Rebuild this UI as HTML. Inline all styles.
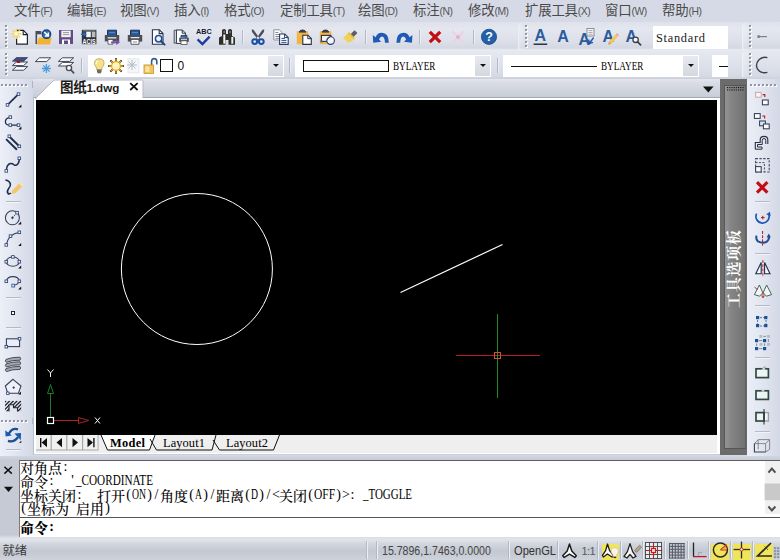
<!DOCTYPE html>
<html lang="zh-CN">
<head>
<meta charset="utf-8">
<title>图纸1.dwg</title>
<style>
*{box-sizing:border-box;margin:0;padding:0}
html,body{width:780px;height:560px;overflow:hidden;background:#d3d9e7}
body{position:relative;font-family:"Liberation Sans","Noto Sans CJK SC",sans-serif;font-size:13px;color:#3c3c3c}
.abs,svg.ic,.sepv,.seph,.grip,.griph{position:absolute}
svg.ic{overflow:visible}
#menubar{left:0;top:0;width:780px;height:22px;background:#d6dae6}
#menubar span{position:absolute;top:1px;height:20px;line-height:20px;white-space:nowrap;font-size:13.4px;color:#4a4a4a;letter-spacing:-0.2px}
#menubar span i{font-style:normal;font-size:10.4px;letter-spacing:-0.45px;color:#555}
#tb1{left:0;top:22px;width:780px;height:29px;background:linear-gradient(#dfe2eb 0,#e4e7ef 25%,#dde0e9 65%,#d4d8e2 90%,#ebedf3 97%,#e4e7ef 100%)}
#tb2{left:0;top:51px;width:780px;height:28px;background:linear-gradient(#e5e8f0 0,#e0e3ec 40%,#d6dae4 88%,#cdd1dc 100%)}
.grip{width:3px;background:linear-gradient(#8f97a9 0,#8f97a9 1.800px,transparent 1.800px) 0 0/1.800px 4px repeat-y,linear-gradient(#fff 0,#fff 1.800px,transparent 1.800px) 1px 1px/1.800px 4px repeat-y}
.griph{height:3px;background:linear-gradient(90deg,#8f97a9 0,#8f97a9 1.800px,transparent 1.800px) 0 0/4px 1.800px repeat-x,linear-gradient(90deg,#fff 0,#fff 1.800px,transparent 1.800px) 1px 1px/4px 1.800px repeat-x}
.sepv{width:2px;border-left:1px solid #b2b8c7;border-right:1px solid #eceef5}
.seph{height:2px;border-top:1px solid #b4bac9;border-bottom:1px solid #f1f3f8}
#lefttb{left:0;top:79px;width:33px;height:378px;background:linear-gradient(90deg,#eceff7 0,#e2e6f0 45%,#d3d8e6 100%)}
#tabrow{left:33px;top:78px;width:688px;height:20px;background:linear-gradient(#c4c8d4 0,#e2e5ec 1.5px,#dadde6 4px,#c9cdd8 19px)}
#frame{left:33px;top:97px;width:687px;height:358px;border-bottom:1.500px solid #c9cdd6;background:#fff;border-left:1px solid #b9bfcd;border-top:1px solid #a3a8b6}
#canvas{left:36px;top:100px;width:681px;height:335px;background:#000}
#botrow{left:36px;top:435px;width:681px;height:18px;background:#efefef}
#palette{left:720px;top:79px;width:27px;height:376px;background:#6b6b6b}
#palin{left:724px;top:85px;width:22px;height:364px;background:linear-gradient(90deg,#949494 0,#858585 30%,#727272 100%);border:1px solid #565656;border-right-color:#606060}
#righttb{left:747px;top:79px;width:33px;height:378px;background:linear-gradient(90deg,#eceff7 0,#e2e6f0 45%,#d3d8e6 100%)}
#cmd{left:0;top:456px;width:780px;height:84px;background:linear-gradient(#d2d6e0 0,#c5cad5 4px,#c5cad5 79px,#dfe2e9 82px)}
#cmdtext{left:19px;top:459.500px;width:761px;height:57.500px;background:#fff;border-top:1px solid #5e5e5e;border-left:1px solid #7c7c7c}
#cmdscroll{left:764.500px;top:460.500px;width:15.500px;height:53.500px;background:#f0f0f0}
#cmdin{left:19px;top:517px;width:761px;height:20px;background:#fff;border-top:1px solid #555;border-left:1px solid #7c7c7c}
#status{left:0;top:540px;width:780px;height:20px;background:linear-gradient(#e2e4ea 0,#d2d6de 18%,#c4c8d2 55%,#c9cdd6 80%,#cfd3db 100%)}
.song{font-family:"Liberation Mono","Noto Serif CJK SC",monospace}
.cl{position:absolute;left:20px;height:14px;line-height:14px;font-size:14px;color:#000;white-space:pre;font-family:"Noto Serif CJK SC","Liberation Mono",serif;font-weight:500}
.cl b{font-weight:inherit;font-family:"Liberation Serif",serif;font-size:14px;display:inline-block;width:7px;height:14px;line-height:14px;vertical-align:top;text-align:center;white-space:pre}
.cl b.w{text-align:left}
.cl u{display:inline-block;text-decoration:none;transform-origin:0 50%;white-space:pre}
.combo{position:absolute;background:#fff;height:22px;top:55px}
.cbtn{position:absolute;top:1px;right:1.300px;width:14.400px;height:19.600px;background:linear-gradient(#e9eaf0,#dcdee6 60%,#d6d8e1)}
.cbtn:after{content:"";position:absolute;left:4.800px;top:7.800px;border:3px solid transparent;border-top:3.300px solid #111;border-bottom:0}
.t12{position:absolute;font-family:"Liberation Mono",monospace;font-size:11.2px;letter-spacing:-0.72px;color:#000;white-space:pre;line-height:14px;height:14px}
.sq{font-family:"Liberation Serif",serif;font-size:12.2px;letter-spacing:0;transform-origin:0 50%;transform:scaleX(.752)}
</style>
</head>
<body>
<div id="menubar" class="abs"><span style="left:14px">文件<i>(F)</i></span><span style="left:67px">编辑<i>(E)</i></span><span style="left:120px">视图<i>(V)</i></span><span style="left:174px">插入<i>(I)</i></span><span style="left:224px">格式<i>(O)</i></span><span style="left:280px">定制工具<i>(T)</i></span><span style="left:358px">绘图<i>(D)</i></span><span style="left:413px">标注<i>(N)</i></span><span style="left:468px">修改<i>(M)</i></span><span style="left:525px">扩展工具<i>(X)</i></span><span style="left:605px">窗口<i>(W)</i></span><span style="left:662px">帮助<i>(H)</i></span></div>
<div id="tb1" class="abs"></div>
<div id="tb2" class="abs"></div>
<!-- toolbar row 1 -->
<div class="grip" style="left:5px;top:25px;height:23px"></div>
<svg class="ic" style="left:12px;top:29px" width="16" height="16" viewBox="0 0 16 16"><path d="M4.600 1.400H11.400L15.400 5.400V15.200H4.600Z" fill="#fff" stroke="#20222c" stroke-width="1.200"/><path d="M11.200 1.400V5.600H15.400" fill="none" stroke="#20222c" stroke-width="1.100"/><g stroke="#f4d466" stroke-width="1.400" stroke-linecap="round"><path d="M4.300 .2V9.200M-.2 4.700H8.800M1.100 1.500L7.500 7.900M7.500 1.500L1.100 7.900"/></g><circle cx="4.300" cy="4.700" r="2.300" fill="#fdf0a8"/><circle cx="4.300" cy="4.700" r="1.100" fill="#fffbe0"/></svg>
<svg class="ic" style="left:35px;top:29px" width="17" height="16" viewBox="0 0 17 16"><path d="M.5 15V2H5.400Q6.400 2 6.400 3V5.200H2.100V15Z" fill="#4a4c56"/><path d="M2.800 15.600Q2 15.600 2.200 14.700L3.400 9.400Q3.600 8.500 4.600 8.500H15.400Q16.500 8.500 16.300 9.500L15.200 14.800Q15 15.600 14 15.600Z" fill="#f2b234"/><circle cx="11.500" cy="5.200" r="4.300" fill="#2a68bc" stroke="#1c3a70" stroke-width="1.100"/><path d="M9.200 3L12.800 6.600M13.300 3.600V7.100H9.800" fill="none" stroke="#fff" stroke-width="1.500"/></svg>
<svg class="ic" style="left:58px;top:29px" width="16" height="16" viewBox="0 0 16 16"><path d="M1 1H15V15H1Z" fill="#624c86"/><rect x="3.3" y="1.6" width="9.4" height="6.6" fill="#f2f2f4"/><path d="M5 3.6H11M5 5.6H11" stroke="#9a9aa2" stroke-width="1"/><rect x="4" y="10.5" width="8" height="4.5" fill="#fff"/><rect x="6" y="11.5" width="4" height="3.5" fill="#624c86"/></svg>
<svg class="ic" style="left:81px;top:29px" width="16" height="16" viewBox="0 0 16 16"><rect x=".8" y=".8" width="14.6" height="14.4" fill="#30343f"/><rect x="5.2" y="2.6" width="4.6" height="5.6" fill="#f4f4f4"/><rect x="10.8" y="2.6" width="3.6" height="5.6" fill="#bdbdbd"/><rect x="1.8" y="1.4" width="12.6" height=".9" fill="#8c8c8c"/><path d="M0 5.3H4M2.6 3.6L4.6 5.3L2.6 7" stroke="#2a66b8" stroke-width="1.5" fill="none"/><text x="1.600" y="14.700" font-family="Liberation Sans,sans-serif" font-weight="bold" font-size="7.600" fill="#fff" textLength="13" lengthAdjust="spacingAndGlyphs">ACIS</text></svg>
<svg class="ic" style="left:104px;top:29px" width="16" height="16" viewBox="0 0 16 16"><path d="M3.5 6V1.2H12.5V6" fill="#1f57a8" stroke="#2a3247" stroke-width="1"/><rect x="5" y="3" width="6" height="1.2" fill="#4f86cf"/><path d="M.8 6H15.2V12.4H.8Z" fill="#4a4e58"/><rect x="3.6" y="8.2" width="8.8" height="1.3" fill="#e8e8e8"/><path d="M4 10.5H9V15.2H4Z" fill="#fff" stroke="#4a4e58" stroke-width=".8"/><path d="M7 12.6H12.2V10.2L16 13.2L12.2 16V14.2H7Z" fill="#7a4aa8"/></svg>
<svg class="ic" style="left:127px;top:29px" width="16" height="16" viewBox="0 0 16 16"><path d="M3.5 6V1.2H12.5V6" fill="#1f57a8" stroke="#2a3247" stroke-width="1"/><rect x="5" y="3" width="6" height="1.2" fill="#4f86cf"/><path d="M.8 6H15.2V12.6H.8Z" fill="#4a4e58"/><rect x="3.6" y="8" width="8.8" height="1.3" fill="#e8e8e8"/><path d="M4 10.4H12V15.3H4Z" fill="#fff" stroke="#4a4e58" stroke-width=".9"/><path d="M6 13H10" stroke="#888" stroke-width="1"/></svg>
<svg class="ic" style="left:150px;top:29px" width="16" height="16" viewBox="0 0 16 16"><path d="M2.4 .8H9.4L13 4.4V15.2H2.4Z" fill="#fff" stroke="#2a3247" stroke-width="1.1"/><path d="M9.2 .8V4.6H13" fill="none" stroke="#2a3247" stroke-width="1.1"/><circle cx="8.6" cy="9.8" r="3.2" fill="#eef3fb" stroke="#1f4f98" stroke-width="1.5"/><path d="M11 12.2L14.6 15.6" stroke="#1f3f78" stroke-width="1.9" stroke-linecap="round"/></svg>
<svg class="ic" style="left:173px;top:29px" width="16" height="16" viewBox="0 0 16 16"><path d="M1.2 1.2H5M1.2 1.2V14H5" fill="none" stroke="#555b6b" stroke-width="1.1"/><path d="M3.4 1H9.4L12.4 4V14.4H3.4Z" fill="#fff" stroke="#2a3247" stroke-width="1"/><path d="M9.2 1V4.2H12.4" fill="none" stroke="#2a3247" stroke-width="1"/><path d="M8 8.6V6.4H14V8.6" fill="#2a66b8" stroke="#2a3247" stroke-width=".8"/><rect x="6.2" y="8.6" width="9.6" height="4.2" fill="#4a4e58"/><rect x="8" y="9.8" width="6" height="1" fill="#dfe6f2"/><rect x="8" y="11.8" width="6" height="3.6" fill="#fff" stroke="#4a4e58" stroke-width=".8"/></svg>
<svg class="ic" style="left:196px;top:29px" width="16" height="16" viewBox="0 0 16 16"><text x="0" y="5.300" font-family="Liberation Sans,sans-serif" font-weight="bold" font-size="8" fill="#141a30" textLength="15.700" lengthAdjust="spacingAndGlyphs">ABC</text><path d="M1.600 10.400L6.400 15L13.600 7.600" fill="none" stroke="#1c3c9c" stroke-width="2.400"/></svg>
<svg class="ic" style="left:219px;top:29px" width="16" height="16" viewBox="0 0 16 16"><path d="M0 15.700V8.500L3 7V1.500Q3 0 5 0T7 1.500V5H9V1.500Q9 0 11 0T13 1.500V7L16 8.500V15.700H9.500V11H6.500V15.700Z" fill="#2e2e2c"/><rect x="4.300" y="5.500" width="2" height="9.200" fill="#f4f4f2"/><rect x="12.300" y="8" width="2" height="6.700" fill="#f4f4f2"/><rect x="4.600" y="1.800" width="1.200" height="2.400" fill="#8a8a88"/><rect x="10.400" y="1.800" width="1.200" height="2.400" fill="#8a8a88"/></svg>
<div class="sepv" style="left:242px;top:30px;height:14px"></div>
<svg class="ic" style="left:250px;top:29px" width="16" height="16" viewBox="0 0 16 16"><path d="M1.800 .6Q3.600 .4 4.400 2L10.400 10.600L8.600 11.400L2.400 3.400Q1.600 2 1.800 .6ZM14.200 .6Q12.400 .4 11.600 2L5.600 10.600L7.400 11.400L13.600 3.400Q14.400 2 14.200 .6Z" fill="#4a4c58"/><circle cx="4.700" cy="12.600" r="2.400" fill="#d6e6fa" stroke="#1c4fa4" stroke-width="2"/><circle cx="11.300" cy="12.600" r="2.400" fill="#d6e6fa" stroke="#1c4fa4" stroke-width="2"/></svg>
<svg class="ic" style="left:273px;top:29px" width="16" height="16" viewBox="0 0 16 16"><path d="M.8 .8H6.400L9 3.400V11H.8Z" fill="#fff" stroke="#8b91a2" stroke-width="1"/><path d="M2.400 3.500H5.400M2.400 5.500H6M2.400 7.500H6M2.400 9.300H6" stroke="#8088a0" stroke-width="1"/><path d="M6.6 5H11.8L15.2 8.4V15.4H6.6Z" fill="#fff" stroke="#2a3a5c" stroke-width="1.1"/><path d="M11.6 5V8.6H15.2" fill="none" stroke="#2a3a5c" stroke-width="1"/><path d="M8.4 9.4H12M8.4 11.4H13.4M8.4 13.4H13.4" stroke="#2a4f8f" stroke-width="1"/></svg>
<svg class="ic" style="left:296px;top:29px" width="16" height="16" viewBox="0 0 16 16"><rect x=".8" y="2.2" width="11.4" height="13" fill="#f0b545"/><path d="M3.6 2.8Q3.6 .4 6.5 .4T9.4 2.8Z" fill="#3a3d48"/><rect x="3" y="2" width="7" height="1.6" fill="#3a3d48"/><path d="M6.8 6.2H12L15.3 9.5V15.4H6.8Z" fill="#fff" stroke="#2a3247" stroke-width="1.1"/><path d="M11.8 6.2V9.7H15.3" fill="none" stroke="#2a3247" stroke-width="1"/></svg>
<svg class="ic" style="left:319px;top:29px" width="16" height="16" viewBox="0 0 16 16"><rect x=".8" y="2.2" width="11.4" height="13" fill="#f0b545"/><path d="M3.6 2.8Q3.6 .4 6.5 .4T9.4 2.8Z" fill="#3a3d48"/><rect x="3" y="2" width="7" height="1.6" fill="#3a3d48"/><rect x="2.4" y="6.4" width="9.6" height="6" fill="#f4f4f6" stroke="#2a3247" stroke-width="1.1"/><circle cx="11.6" cy="11.6" r="3.8" fill="#f4f6fa" stroke="#2a3a6c" stroke-width="1.1"/><path d="M8 11L11.5 7" stroke="#2a3247" stroke-width=".8"/><rect x="1.4" y="11.4" width="2" height="2" fill="#3b5fc0"/></svg>
<svg class="ic" style="left:342px;top:29px" width="16" height="16" viewBox="0 0 16 16"><path d="M8.2 5.6L12.6 1.2L15.4 4L11 8.4Z" fill="#5a5d66"/><path d="M1 9L5.6 4.4L11.6 10.4L9.6 12.4L6 13.8Z" fill="#f0d25a"/><path d="M5.6 4.4L7 3L13 9L11.6 10.4Z" fill="#e6c23c"/></svg>
<div class="sepv" style="left:365px;top:30px;height:14px"></div>
<svg class="ic" style="left:372px;top:29px" width="16" height="16" viewBox="0 0 16 16"><path d="M.8 6.1L1.2 13.8L9.2 12.8L7 10.6Q8.2 7.4 10 7.4Q12.8 7.6 13 13.8H16.8Q16.8 3.8 9.8 3.8Q5.4 3.8 3.6 8.2Z" fill="#1f5ab4"/></svg>
<svg class="ic" style="left:395px;top:29px" width="16" height="16" viewBox="0 0 16 16"><path d="M17.4 6.1L17.0 13.8L9.0 12.8L11.2 10.6Q10.0 7.4 8.2 7.4Q5.4 7.6 5.2 13.8H1.4Q1.4 3.8 8.4 3.8Q12.8 3.8 14.6 8.2Z" fill="#1f5ab4"/></svg>
<div class="sepv" style="left:419px;top:30px;height:14px"></div>
<svg class="ic" style="left:427px;top:29px" width="16" height="16" viewBox="0 0 16 16"><path d="M2.8 2.8L13.2 13.2M13.2 2.8L2.8 13.2" stroke="#c40d12" stroke-width="3.2"/></svg>
<svg class="ic" style="left:450px;top:29px" width="16" height="16" viewBox="0 0 16 16"><path d="M2.4 2.4L13 13.4M13.6 2.4L3 13.4" stroke="#ecd2e4" stroke-width="2.4"/><circle cx="8" cy="8" r="2" fill="#dfb4d0"/></svg>
<div class="sepv" style="left:473px;top:30px;height:14px"></div>
<svg class="ic" style="left:480px;top:28px" width="18" height="18" viewBox="0 0 18 18"><circle cx="9" cy="8.800" r="7.600" fill="#2460a8" stroke="#1b4a88" stroke-width=".8"/><text x="9" y="13.200" font-family="Liberation Sans,sans-serif" font-weight="bold" font-size="12.500" fill="#fff" text-anchor="middle">?</text></svg>
<!-- text toolbar -->
<div class="abs" style="left:518px;top:23px;width:30px;height:27px;border-left:1px solid #eceef4;border-top-left-radius:3px;background:linear-gradient(90deg,rgba(255,255,255,.22),rgba(255,255,255,0) 6px)"></div>
<div class="grip" style="left:525px;top:25px;height:23px"></div>
<svg class="ic" style="left:533px;top:28px" width="16" height="18" viewBox="0 0 16 18"><text x="7.4" y="13.4" font-family="Liberation Sans,sans-serif" font-weight="bold" font-size="16" fill="#2b5d9e" text-anchor="middle">A</text><path d="M.6 16.2H14.2" stroke="#101828" stroke-width="1.3"/></svg>
<svg class="ic" style="left:556px;top:28px" width="16" height="18" viewBox="0 0 16 18"><text x="7" y="14" font-family="Liberation Sans,sans-serif" font-weight="bold" font-size="16" fill="#2b5d9e" text-anchor="middle">A</text></svg>
<svg class="ic" style="left:578px;top:28px" width="18" height="18" viewBox="0 0 18 18"><text x="6.4" y="17.4" font-family="Liberation Sans,sans-serif" font-weight="bold" font-size="16" fill="#2b5d9e" text-anchor="middle">A</text><rect x="9" y=".6" width="7" height="7.4" fill="#fff" stroke="#7a7f8c" stroke-width=".9"/><path d="M10.4 2.6H14.6M10.4 4.4H14.6M10.4 6.2H14.6" stroke="#8a8f9c" stroke-width=".8"/><path d="M15.6 9.6L11.4 15.2M10.6 11.6L11.2 15.6L15 14.4" stroke="#1f57a8" stroke-width="1.5" fill="none"/></svg>
<svg class="ic" style="left:602px;top:28px" width="18" height="18" viewBox="0 0 18 18"><text x="6.4" y="14" font-family="Liberation Sans,sans-serif" font-weight="bold" font-size="16" fill="#2b5d9e" text-anchor="middle">A</text><path d="M7 13.6L13.6 6.4L16 8.6L9.4 15.8L6.2 16.8Z" fill="#f1c85a"/><path d="M13.6 6.4L15 5L17.2 7.2L16 8.6Z" fill="#f3a6a0"/><path d="M6.2 16.8L7 13.6L9.4 15.8Z" fill="#caa560"/></svg>
<svg class="ic" style="left:625px;top:28px" width="18" height="18" viewBox="0 0 18 18"><text x="6.4" y="14" font-family="Liberation Sans,sans-serif" font-weight="bold" font-size="16" fill="#2b5d9e" text-anchor="middle">A</text><circle cx="10.6" cy="11.8" r="2.7" fill="#f4f6fa" stroke="#3a3f4c" stroke-width="1.3"/><path d="M12.6 13.8L15.6 16.8" stroke="#3a3f4c" stroke-width="1.7" stroke-linecap="round"/></svg>
<div class="abs" style="left:653px;top:26px;width:75px;height:23px;background:#fff"></div>
<div class="t12" style="left:656px;top:31px;font-family:'Liberation Serif',serif;font-size:12.4px;letter-spacing:0.7px;color:#1a1a1a">Standard</div>
<div class="abs" style="left:742px;top:23px;width:38px;height:27px;border-left:1px solid #eef0f6;border-top-left-radius:3px;background:linear-gradient(90deg,rgba(255,255,255,.25),rgba(255,255,255,0) 8px)"></div><div class="grip" style="left:749px;top:25px;height:23px"></div>
<svg class="ic" style="left:756px;top:29px" width="16" height="16" viewBox="0 0 16 16"><path d="M2 7.6H11" stroke="#7a8090" stroke-width="1.2"/><rect x="1.4" y="6.2" width="2.4" height="2.8" fill="#7a8090"/></svg>
<!-- toolbar row 2 -->
<div class="grip" style="left:5px;top:53px;height:23px"></div>
<svg class="ic" style="left:12px;top:57px" width="16" height="16" viewBox="0 0 16 16"><path d="M4.4 .6H15.6L11.6 4.2H.4Z" fill="#3d4f86" stroke="#2a3247" stroke-width=".7"/><path d="M4.4 5H15.6L11.6 8.6H.4Z" fill="#fff" stroke="#2a3247" stroke-width=".9"/><path d="M4.4 9.6H15.6L11.6 13.2H.4Z" fill="#fff" stroke="#2a3247" stroke-width=".9"/><rect x="4.8" y="3.6" width="3.2" height="2.4" fill="#a01818"/></svg>
<svg class="ic" style="left:35px;top:57px" width="16" height="16" viewBox="0 0 16 16"><path d="M4.4 .8H15.6L11.6 4.6H.4Z" fill="#fff" stroke="#2a3247" stroke-width=".9"/><g stroke="#4a9be0" stroke-width="1.3"><path d="M11.4 7V16M7 11.5H15.8M8.2 8.4L14.6 14.6M14.6 8.4L8.2 14.6"/></g></svg>
<svg class="ic" style="left:58px;top:57px" width="16" height="16" viewBox="0 0 16 16"><path d="M4.4 .8H15.6L11.6 4.4H.4Z" fill="#fff" stroke="#2a3247" stroke-width=".9"/><path d="M4.4 5.4H15.6L11.6 9H.4Z" fill="#fff" stroke="#2a3247" stroke-width=".9"/><circle cx="11" cy="11" r="2.6" fill="#f6f6f6" stroke="#4a4e58" stroke-width="1.4"/><path d="M13 13L15.6 15.8" stroke="#4a4e58" stroke-width="1.8" stroke-linecap="round"/></svg>
<div class="sepv" style="left:81px;top:58px;height:14.500px"></div>
<div class="combo" style="left:88px;width:196px"><div class="cbtn"></div></div>
<svg class="ic" style="left:92.500px;top:57.800px" width="12.500" height="16" viewBox="0 0 14 18"><path d="M7 .8Q12.4 .8 12.4 6Q12.4 8.6 10 11V13H4V11Q1.6 8.6 1.6 6Q1.6 .8 7 .8Z" fill="#f8e08a" stroke="#b9a04a" stroke-width=".9"/><path d="M5 3Q3.4 4.4 3.6 7" stroke="#fffbe0" stroke-width="1.4" fill="none"/><rect x="4.4" y="13" width="5.2" height="3.2" fill="#6c6c70"/><path d="M5.2 16.6H8.8" stroke="#4a4a4e" stroke-width="1.2"/></svg>
<svg class="ic" style="left:108px;top:58px" width="16" height="16" viewBox="0 0 16 16"><g stroke="#2a2418" stroke-width="1.9"><path d="M8 .2V15.8M.2 8H15.8M2.4 2.4L13.6 13.6M13.6 2.4L2.4 13.6"/></g><g stroke="#e0a81c" stroke-width="1.3"><path d="M8 1V15M1 8H15M3 3L13 13M13 3L3 13"/></g><circle cx="8" cy="8" r="4.4" fill="#fff3c4" stroke="#e0a81c" stroke-width="1.2"/></svg>
<svg class="ic" style="left:126px;top:58px" width="14" height="16" viewBox="0 0 14 16"><rect x="2" y=".8" width="11" height="14" fill="#f4f6f8" stroke="#dfe3ea" stroke-width=".8"/><g stroke="#b4bcc8" stroke-width="1"><path d="M6 2V12M1 7H11M2.6 3.6L9.4 10.4M9.4 3.6L2.6 10.4"/></g></svg>
<svg class="ic" style="left:143px;top:57px" width="16" height="18" viewBox="0 0 16 18"><path d="M8.6 9V4.6Q8.6 1.6 11.2 1.6T13.8 4.6V7.4" fill="none" stroke="#2f5f96" stroke-width="1.6"/><rect x="1" y="8" width="9.6" height="8.4" fill="#f3c560" stroke="#c89a38" stroke-width=".9"/><rect x="2.4" y="9.4" width="4" height="5.6" fill="#fbe3a4"/></svg>

<div class="abs" style="left:160px;top:59px;width:13px;height:13px;background:#fff;border:1.5px solid #111"></div>
<div class="abs" style="left:177.500px;top:58px;font-size:12px;line-height:16px;color:#111">0</div>
<div class="sepv" style="left:289px;top:58px;height:14.500px"></div>
<div class="combo" style="left:295px;width:196px"><div class="cbtn"></div></div>
<div class="abs" style="left:303px;top:60px;width:86px;height:12px;background:#fff;border:1.4px solid #111"></div>
<div class="t12 sq" style="left:392.500px;top:59px">BYLAYER</div>
<div class="sepv" style="left:497px;top:58px;height:14.500px"></div>
<div class="combo" style="left:503px;width:196px"><div class="cbtn"></div></div>
<div class="abs" style="left:510.500px;top:65.700px;width:86.500px;height:1.300px;background:#111"></div>
<div class="t12 sq" style="left:600.500px;top:59px">BYLAYER</div>
<div class="combo" style="left:712px;width:16px"></div>
<div class="abs" style="left:719px;top:65.700px;width:9px;height:1.300px;background:#111"></div>
<div class="abs" style="left:742px;top:52px;width:38px;height:25px;border-left:1px solid #eef0f6;border-top-left-radius:3px;background:linear-gradient(90deg,rgba(255,255,255,.25),rgba(255,255,255,0) 8px)"></div><div class="grip" style="left:749px;top:53px;height:23px"></div>
<svg class="ic" style="left:755px;top:56px" width="13" height="18" viewBox="0 0 13 18"><path d="M12.4 1.6Q8 .2 4.2 3.600Q1 7 1.600 10.600Q2.600 15.400 8 16.600Q10 17 12.400 16.400" fill="none" stroke="#3a3f4c" stroke-width="1.4"/></svg>
<div id="lefttb" class="abs"></div>
<div id="righttb" class="abs"></div>
<div id="tabrow" class="abs"></div>
<div id="frame" class="abs"></div>
<div id="botrow" class="abs"></div>
<div id="canvas" class="abs"></div>
<div id="palette" class="abs"></div>
<div id="palin" class="abs"></div>
<!-- document tab -->
<svg class="ic" style="left:33px;top:78px" width="120" height="21" viewBox="0 0 120 21"><path d="M2.500 20.500L20 3Q21 2 22.500 2H108.500Q110 2 110 3.500V20.500Z" fill="#fff" stroke="#b4bac8" stroke-width="1"/><path d="M3.400 21V19.900H110.500V21Z" fill="#fff"/></svg>
<div class="abs" style="left:60px;top:79px;height:17px;line-height:17px;font-size:13.5px;font-weight:bold;color:#1a1a1a;white-space:nowrap;letter-spacing:-0.3px">图纸<span style="font-size:11.6px;letter-spacing:0">1.dwg</span></div>
<svg class="ic" style="left:129px;top:82px" width="10" height="10" viewBox="0 0 10 10"><path d="M1.200 1.200L8.600 8M8.600 1.200L1.200 8" stroke="#111" stroke-width="1.800"/></svg>
<svg class="ic" style="left:703px;top:86px" width="11" height="7" viewBox="0 0 11 7"><path d="M0 .4H10.6L5.3 6.4Z" fill="#111"/></svg>
<!-- left toolbar -->
<div class="griph" style="left:1px;top:84px;width:27px"></div>
<div class="abs" style="left:31.500px;top:80.500px;width:1px;height:7px;background:#b0b6c6"></div><div class="abs" style="left:31.800px;top:417.500px;width:1px;height:6px;background:#b0b6c6"></div>
<svg class="ic" style="left:5px;top:91px" width="18" height="18" viewBox="0 0 18 18"><path d="M2.6 13.8L13.4 3.2" stroke="#1f2d4d" stroke-width="1.7"/><rect x="1.2" y="12.6" width="2.6" height="2.6" fill="#f4f6fb" stroke="#2f4878" stroke-width=".85"/><rect x="12.2" y="1.8" width="2.6" height="2.6" fill="#f4f6fb" stroke="#2f4878" stroke-width=".85"/><path d="M16.4 13.4V16.4H13.4Z" fill="#111"/></svg>
<svg class="ic" style="left:4px;top:114px" width="18" height="18" viewBox="0 0 18 18"><path d="M6 3.4Q1.2 4.2 1.4 8Q1.8 11.4 6 11.2H14" fill="none" stroke="#1f2d4d" stroke-width="1.3"/><rect x="5" y="1.8" width="2.6" height="2.6" fill="#f4f6fb" stroke="#2f4878" stroke-width=".85"/><rect x="5" y="9.8" width="2.6" height="2.6" fill="#f4f6fb" stroke="#2f4878" stroke-width=".85"/><rect x="13.2" y="9.8" width="2.6" height="2.6" fill="#f4f6fb" stroke="#2f4878" stroke-width=".85"/><path d="M17.4 12.6V15.6H14.4Z" fill="#111"/></svg>
<svg class="ic" style="left:5px;top:134px" width="18" height="18" viewBox="0 0 18 18"><path d="M4.6 2.8L14 12M1.6 5.6L11.4 15.2" stroke="#1f2d4d" stroke-width="1.9" stroke-linecap="round"/><rect x="3" y="1" width="2.6" height="2.6" fill="#f4f6fb" stroke="#2f4878" stroke-width=".85"/><rect x="13" y="11" width="2.6" height="2.6" fill="#f4f6fb" stroke="#2f4878" stroke-width=".85"/></svg>
<svg class="ic" style="left:4px;top:156px" width="18" height="18" viewBox="0 0 18 18"><path d="M2.4 14.6Q2.6 8.4 6.4 7.6Q8.4 7.4 10 8.8Q12 10 13.8 8Q15.6 6 15.2 2.6" fill="none" stroke="#1f2d4d" stroke-width="1.5"/><rect x="1" y="13.6" width="2.6" height="2.6" fill="#f4f6fb" stroke="#2f4878" stroke-width=".85"/><rect x="14" y="1" width="2.6" height="2.6" fill="#f4f6fb" stroke="#2f4878" stroke-width=".85"/></svg>
<svg class="ic" style="left:4px;top:178px" width="20" height="18" viewBox="0 0 20 18"><path d="M1.4 2Q5.4 2.6 6.4 6Q6.8 8.4 4.6 10.6Q2.6 13.4 4 15.4Q5 16.6 7 15" fill="none" stroke="#1f2d4d" stroke-width="1.6"/><path d="M8.6 12.2L15 5.6L18.2 8.6L11.6 15L7.4 16.2Z" fill="#f3c66a"/><path d="M15 5.6L16.2 4.4Q17 4 17.8 4.8L19 6Q19.6 7 19.2 7.6L18.2 8.6Z" fill="#fbe3b4"/></svg>
<div class="seph" style="left:6px;top:201px;width:15px"></div>
<svg class="ic" style="left:4px;top:208px" width="18" height="18" viewBox="0 0 18 18"><circle cx="8.4" cy="9.8" r="7" fill="none" stroke="#343c55" stroke-width="1.05"/><path d="M8.4 9.8L12.8 5" stroke="#2a3350" stroke-width=".9" stroke-dasharray="1.6 1"/><path d="M7 9.8H9.8M8.4 8.4V11.2" stroke="#2a3350" stroke-width=".9"/><rect x="11.8" y="3.4" width="2.6" height="2.6" fill="#f4f6fb" stroke="#2f4878" stroke-width=".85"/><path d="M17.2 13.6V16.6H14.2Z" fill="#111"/></svg>
<svg class="ic" style="left:4px;top:230px" width="18" height="18" viewBox="0 0 18 18"><path d="M2.4 14.8Q3.6 9 6.6 6.4Q10 3.2 15 2.6" fill="none" stroke="#343c55" stroke-width="1.05"/><rect x="1" y="13.6" width="2.6" height="2.6" fill="#f4f6fb" stroke="#2f4878" stroke-width=".85"/><rect x="5.2" y="4.8" width="2.6" height="2.6" fill="#f4f6fb" stroke="#2f4878" stroke-width=".85"/><rect x="14" y="1" width="2.6" height="2.6" fill="#f4f6fb" stroke="#2f4878" stroke-width=".85"/><path d="M17.2 13V16H14.2Z" fill="#111"/></svg>
<svg class="ic" style="left:4px;top:253px" width="18" height="18" viewBox="0 0 18 18"><ellipse cx="8.8" cy="8.6" rx="6.6" ry="4.6" fill="none" stroke="#343c55" stroke-width="1.05"/><rect x="7.6" y="2.6" width="2.6" height="2.6" fill="#f4f6fb" stroke="#2f4878" stroke-width=".85"/><rect x="1" y="7.4" width="2.6" height="2.6" fill="#f4f6fb" stroke="#2f4878" stroke-width=".85"/><rect x="14" y="7.4" width="2.6" height="2.6" fill="#f4f6fb" stroke="#2f4878" stroke-width=".85"/><path d="M17.2 12.6V15.6H14.2Z" fill="#111"/></svg>
<svg class="ic" style="left:4px;top:274px" width="18" height="18" viewBox="0 0 18 18"><path d="M2.4 7Q3.4 2.6 8.8 2.6Q14.6 2.6 15.4 7Q14.6 10.6 9 11.4" fill="none" stroke="#343c55" stroke-width="1.05"/><rect x="1" y="6" width="2.6" height="2.6" fill="#f4f6fb" stroke="#2f4878" stroke-width=".85"/><rect x="14" y="6" width="2.6" height="2.6" fill="#f4f6fb" stroke="#2f4878" stroke-width=".85"/><rect x="7.8" y="10.2" width="2.8" height="2.8" fill="#dbe6f8" stroke="#3a5f9a" stroke-width=".9"/><path d="M17.2 12.6V15.6H14.2Z" fill="#111"/></svg>
<div class="seph" style="left:6px;top:297px;width:15px"></div>
<div class="abs" style="left:11.200px;top:311.200px;width:4.200px;height:4.200px;background:#fff;border:1px solid #1f2333"></div>
<div class="seph" style="left:6px;top:327px;width:15px"></div>
<svg class="ic" style="left:4px;top:334px" width="18" height="18" viewBox="0 0 18 18"><rect x="2.4" y="4.8" width="13.2" height="7.8" fill="#e9eefa" stroke="#343c55" stroke-width="1.05"/><rect x="1" y="11.4" width="2.6" height="2.6" fill="#f4f6fb" stroke="#2f4878" stroke-width=".85"/><rect x="14.2" y="3.4" width="2.6" height="2.6" fill="#f4f6fb" stroke="#2f4878" stroke-width=".85"/></svg>
<svg class="ic" style="left:4px;top:356px" width="18" height="18" viewBox="0 0 18 18"><g fill="#a4a8b2" stroke="#3a3f4c" stroke-width=".9"><path d="M2 3.400Q8 1 16 1.200Q17.400 2.600 16 4.200Q8 4 2.400 6.400Q.6 5 2 3.400Z"/><path d="M2 8Q8 5.600 16 5.800Q17.400 7.200 16 8.800Q8 8.600 2.400 11Q.6 9.600 2 8Z"/><path d="M2 12.600Q8 10.200 16 10.400Q17.400 11.800 16 13.400Q8 13.200 2.400 15.600Q.6 14.200 2 12.600Z"/></g></svg>
<svg class="ic" style="left:4px;top:378px" width="18" height="18" viewBox="0 0 18 18"><path d="M9 1.300L17 8L14.400 15.200H3.800L1.300 8Z" fill="#eef1fa" stroke="#343c55" stroke-width="1.050"/><path d="M8.500 9.600H10.900M9.700 8.400V10.800" stroke="#2a3350" stroke-width=".9"/><rect x="2.600" y="14" width="2.400" height="2.400" fill="#fff" stroke="#2f4878" stroke-width=".85"/><path d="M17 13.600V16.400H14.200Z" fill="#111"/></svg>
<svg class="ic" style="left:4px;top:399px" width="18" height="16" viewBox="0 0 18 16"><defs><clipPath id="hc"><rect x="1" y="1.700" width="16.200" height="10.800"/></clipPath></defs><path d="M-8.6 12.500L2.2 1.700M-4.9 12.500L5.9 1.700M-1.2 12.500L9.6 1.700M2.5 12.500L13.3 1.700M6.2 12.500L17.0 1.700M9.9 12.500L20.7 1.700M13.6 12.500L24.4 1.700M17.3 12.500L28.1 1.700" stroke="#22252d" stroke-width="1.300" clip-path="url(#hc)"/><path d="M5 12.900V5.700H9.500V8.700H13.500V12.900Z" fill="#e3e6ef"/><path d="M5 12.500V5.700H9.500V8.700H13.500V12.500" fill="none" stroke="#22252d" stroke-width="1.100"/></svg>
<div class="griph" style="left:1px;top:420px;width:27px"></div>
<svg class="ic" style="left:4px;top:428px" width="19" height="19" viewBox="0 0 19 19"><path d="M1.2 2.2L1.600 8.600L7.900 7.600Z" fill="#1a5bb0"/><path d="M4.800 5.800Q8.400 -.6 14 1.400" fill="none" stroke="#1a4f98" stroke-width="2.300"/><path d="M10.400 5.400L17 5.100L16.800 12.300Z" fill="#1a5bb0"/><path d="M14 9.200Q9.600 14.800 4 12.800" fill="none" stroke="#1a4f98" stroke-width="2.300"/><path d="M15 14.800H17.300V12.800Z" fill="#111"/></svg><div class="seph" style="left:6px;top:449px;width:15px"></div>
<!-- canvas drawing -->
<svg class="ic" style="left:37px;top:100px" width="680" height="335" viewBox="37 100 680 335"><circle cx="196.900" cy="269" r="75.500" fill="none" stroke="#fff" stroke-width="1"/><path d="M400.500 292.500L502.500 244.500" stroke="#fff" stroke-width="1.200"/><path d="M456 355.500H540" stroke="#b81c1c" stroke-width="1"/><path d="M497.500 314V398" stroke="#228a28" stroke-width="1"/><rect x="494.500" y="352.500" width="6" height="6" fill="none" stroke="#cc5230" stroke-width="1"/><path d="M50.5 417V393.5M50.5 384.5L47.5 393.5H53.5Z" fill="none" stroke="#1c7c28" stroke-width="1"/><path d="M54 420.5H78.5M88.5 420.5L78.5 417.5V423.5Z" fill="none" stroke="#a82424" stroke-width="1"/><rect x="47.5" y="417.5" width="6" height="6" fill="none" stroke="#fff" stroke-width="1.2"/><path d="M47.500 369.500L50.500 373L53.500 369.500M50.500 373V377" stroke="#f4f4f4" stroke-width="1" fill="none"/><path d="M95 417.5L100 423.5M100 417.5L95 423.5" stroke="#fff" stroke-width="1" fill="none"/></svg>
<!-- bottom nav & layout tabs -->
<svg class="ic" style="left:36px;top:435px" width="250" height="18" viewBox="0 0 250 18"><rect x="0" y="0" width="62.500" height="15.500" fill="#a6a6a6"/><g fill="#f0f0f0"><rect x="0" y="0" width="14.600" height="14.500"/><rect x="15.800" y="0" width="14.400" height="14.500"/><rect x="31.400" y="0" width="14.600" height="14.500"/><rect x="47.200" y="0" width="14.400" height="14.500"/></g><g fill="#111"><path d="M4 3H5.400V12.200H4ZM11 3V12.200L5.600 7.600Z"/><path d="M26 3V12.200L20.500 7.600Z"/><path d="M36.500 3V12.200L42 7.600Z"/><path d="M51.500 3V12.200L57 7.600ZM57.200 3H58.600V12.200H57.200Z"/></g><path d="M65 0L71.500 15H113.500L119 0" fill="#fff" stroke="#111" stroke-width="1"/><path d="M114 4L120.500 15H176L180 0" fill="none" stroke="#111" stroke-width="1"/><path d="M177 5L183.500 15H237.500L243.500 0" fill="none" stroke="#111" stroke-width="1"/></svg>
<div class="t12" style="left:110px;top:436px;font-family:'Liberation Serif',serif;font-weight:bold;letter-spacing:0.3px;font-size:12.4px">Model</div>
<div class="t12" style="left:163px;top:436px;font-family:'Liberation Serif',serif;font-size:12.4px;letter-spacing:0.1px">Layout1</div>
<div class="t12" style="left:226px;top:436px;font-family:'Liberation Serif',serif;font-size:12.4px;letter-spacing:0.1px">Layout2</div>
<!-- tool palette -->
<svg class="ic" style="left:727px;top:87px" width="17" height="4" viewBox="0 0 17 4"><g fill="#161616"><rect x="0.0" y="0" width="1.1" height="1.1"/><rect x="2.2" y="0" width="1.1" height="1.1"/><rect x="4.4" y="0" width="1.1" height="1.1"/><rect x="6.6" y="0" width="1.1" height="1.1"/><rect x="8.8" y="0" width="1.1" height="1.1"/><rect x="11.0" y="0" width="1.1" height="1.1"/><rect x="13.2" y="0" width="1.1" height="1.1"/><rect x="15.4" y="0" width="1.1" height="1.1"/><rect x="0.0" y="2.4" width="1.1" height="1.1"/><rect x="2.2" y="2.4" width="1.1" height="1.1"/><rect x="4.4" y="2.4" width="1.1" height="1.1"/><rect x="6.6" y="2.4" width="1.1" height="1.1"/><rect x="8.8" y="2.4" width="1.1" height="1.1"/><rect x="11.0" y="2.4" width="1.1" height="1.1"/><rect x="13.2" y="2.4" width="1.1" height="1.1"/><rect x="15.4" y="2.4" width="1.1" height="1.1"/></g></svg>
<div class="abs" style="left:724.500px;top:228px;width:16px;height:80px"><div style="position:absolute;left:0;top:80px;width:80px;height:16px;line-height:16px;transform-origin:0 0;transform:rotate(-90deg);font-family:'Noto Serif CJK SC','Noto Sans CJK SC',serif;font-weight:700;font-size:15px;color:#fff;white-space:nowrap;letter-spacing:0.75px">工具选项板</div></div>
<!-- right toolbar -->
<div class="griph" style="left:750px;top:84px;width:27px"></div>
<svg class="ic" style="left:754px;top:91px" width="18" height="18" viewBox="0 0 18 18"><rect x="1.6" y="1.4" width="5.6" height="4.8" fill="#fdf4f6" stroke="#c8a8b0" stroke-width="1"/><path d="M8.6 3.6H10.8V6" fill="none" stroke="#c02020" stroke-width="1.2"/><rect x="8.4" y="9" width="5.8" height="4.8" fill="#fafcff" stroke="#343c55" stroke-width="1.05"/></svg>
<svg class="ic" style="left:753px;top:112px" width="20" height="20" viewBox="0 0 20 20"><rect x="1.4" y="1.6" width="5.8" height="4.8" fill="#fafcff" stroke="#343c55" stroke-width="1.05"/><path d="M9.2 4H11.6V6.4" fill="none" stroke="#c02020" stroke-width="1.2"/><rect x="6.6" y="9" width="5.8" height="4.8" fill="#dbe8f8" stroke="#343c55" stroke-width="1.05"/><rect x="10.4" y="12" width="5.8" height="4.8" fill="#fafcff" stroke="#343c55" stroke-width="1.05"/></svg>
<svg class="ic" style="left:754px;top:134px" width="18" height="18" viewBox="0 0 18 18"><path d="M1.300 15.200V8.500H6.200V6Q6.200 2.400 10 2.400T13.800 6V10" fill="none" stroke="#2a3044" stroke-width="1.100"/><path d="M1.300 15.200H8V13H3.500V10.500H8.200V6.500Q8.200 4.500 10 4.500T11.800 6.500V10" fill="none" stroke="#2a3044" stroke-width="1"/></svg>
<svg class="ic" style="left:754px;top:157px" width="18" height="18" viewBox="0 0 18 18"><rect x="1.6" y="1.6" width="13.6" height="13.4" fill="none" stroke="#4a5068" stroke-width="1.1" stroke-dasharray="2.4 1.4"/><path d="M1.6 5.6H10.4V15" fill="none" stroke="#4a5068" stroke-width="1" stroke-dasharray="2 1.4"/><rect x="1.6" y="9.6" width="5.6" height="5.4" fill="#f4f8ff" stroke="#343c55" stroke-width="1.05"/></svg>
<svg class="ic" style="left:755px;top:180px" width="16" height="16" viewBox="0 0 16 16"><path d="M2 2.2L12.4 12.6M12.4 2.2L2 12.6" stroke="#c40d12" stroke-width="3.1"/></svg>
<div class="seph" style="left:755px;top:201px;width:15px"></div>
<svg class="ic" style="left:753px;top:209px" width="20" height="18" viewBox="0 0 20 18"><path d="M3.6 4.6A6.6 6.6 0 1 0 15.8 5.4" fill="none" stroke="#1f57b4" stroke-width="1.7"/><path d="M13.2 5.2L17 2.8L17.6 7.2Z" fill="#1f57b4"/><path d="M8 8.6H11.6M9.8 6.8V10.4" stroke="#b01818" stroke-width="1"/></svg>
<svg class="ic" style="left:754px;top:230px" width="18" height="20" viewBox="0 0 18 20"><path d="M2.6 5.6Q1.4 9 4 11.4Q8.8 14 12.8 11.6Q16 9 14.6 5.4" fill="none" stroke="#1f4f94" stroke-width="2"/><path d="M12.6 7.6L14.8 3.6L16.8 7.6Z" fill="#1f4f94"/><path d="M8.6 1V15.6" stroke="#b01818" stroke-width="1" stroke-dasharray="3 1.2"/></svg>
<div class="seph" style="left:755px;top:253px;width:15px"></div>
<svg class="ic" style="left:754px;top:259px" width="18" height="18" viewBox="0 0 18 18"><path d="M7.2 3.4V14.8H1.8ZM10.6 3.4V14.8H16Z" fill="#f6f8fc" stroke="#1f2d4d" stroke-width="1.1"/><path d="M8.9 1V18" stroke="#c02020" stroke-width="1" stroke-dasharray="3 1.2"/></svg>
<svg class="ic" style="left:753px;top:283px" width="20" height="16" viewBox="0 0 20 16"><path d="M6.4 2L1.4 11.6L6.6 13.2M6.4 2L9.8 9.8L6.6 13.2M13.6 2L18.6 11.6L13.4 13.2M13.6 2L10.2 9.8L13.4 13.2" fill="#f2f6f4" stroke="#2f5a48" stroke-width=".9"/><path d="M1.4 4L4.6 6.6M10 8.6V14.6M8.6 12.6L10 14.8L11.6 12.6" stroke="#c02030" stroke-width=".9" fill="none"/></svg>
<div class="seph" style="left:755px;top:305px;width:15px"></div>
<svg class="ic" style="left:756px;top:316px" width="14" height="14" viewBox="0 0 14 14"><path d="M1.6 1.6H10M1.6 1.6V10M10 1.6V10M1.6 10H10" stroke="#2a5fa0" stroke-width="1" stroke-dasharray="1.6 1.6" stroke-dashoffset="-2.6"/><g fill="#1f4f94"><rect x="0" y="0" width="3.2" height="3.2"/><rect x="8.2" y="0" width="3.2" height="3.2"/><rect x="0" y="8" width="3.2" height="3.2"/><rect x="8.2" y="8" width="3.2" height="3.2"/></g></svg>
<svg class="ic" style="left:755px;top:335px" width="16" height="16" viewBox="0 0 16 16"><g fill="#b4bcc8"><rect x="4.4" y="0" width="3" height="2.8"/><rect x="12" y="0" width="3" height="2.8"/><rect x="4.4" y="8" width="3" height="2.8"/><rect x="12" y="8" width="3" height="2.8"/></g><g fill="#1f4f94"><rect x="0" y="4" width="3.2" height="3.2"/><rect x="8" y="4" width="3.2" height="3.2"/><rect x="0" y="12" width="3.2" height="3.2"/><rect x="8" y="12" width="3.2" height="3.2"/></g><path d="M4 5.6H7.4M4 13.6H7.4M8.4 1.4H11M1.6 8.4V11M13.4 4V7M9.6 8.4V11" stroke="#6a84a8" stroke-width=".9"/></svg>
<div class="seph" style="left:755px;top:357px;width:15px"></div>
<svg class="ic" style="left:754px;top:366px" width="18" height="14" viewBox="0 0 18 14"><rect x="2" y="2.8" width="12.4" height="8.8" fill="#eef4f2" stroke="#2f4a44" stroke-width="1.7"/><path d="M7.4 3.4L11 .6V4" fill="#eef0f8" stroke="#8a90a0" stroke-width=".8"/></svg>
<svg class="ic" style="left:754px;top:389px" width="18" height="12" viewBox="0 0 18 12"><rect x="2" y="1.8" width="12.4" height="8.6" fill="#eef4f2" stroke="#2f4a44" stroke-width="1.7"/><path d="M7.6 1.8H10.4" stroke="#c8ccd4" stroke-width="1.8"/></svg>
<svg class="ic" style="left:754px;top:408px" width="18" height="18" viewBox="0 0 18 18"><rect x="10" y="4.6" width="4.4" height="8.4" fill="#f4f4f6" stroke="#9a9ea8" stroke-width="1.4"/><rect x="2" y="4.6" width="8" height="8.4" fill="#eef4f2" stroke="#2f4a44" stroke-width="1.7"/><path d="M10 1V16.6" stroke="#2f3a44" stroke-width="1.1"/></svg>
<div class="seph" style="left:755px;top:431px;width:15px"></div>
<svg class="ic" style="left:753px;top:438px" width="18" height="16" viewBox="0 0 18 16"><path d="M1.4 5.6L5.2 1.6H16.6V11.4L12.6 14" fill="none" stroke="#7a7f8a" stroke-width=".9"/><path d="M1.4 5.6H12.6V14M12.6 5.6L16.6 1.6M5.2 1.6V11.4" fill="none" stroke="#7a7f8a" stroke-width=".9"/><path d="M1.4 5.6V14H12.6" fill="none" stroke="#3a3f4c" stroke-width="1.1"/></svg>
<div id="cmd" class="abs"></div>
<div id="cmdtext" class="abs"></div>
<div id="cmdscroll" class="abs"></div>
<div id="cmdin" class="abs"></div>
<div id="status" class="abs"></div>
<!-- command window -->
<svg class="ic" style="left:3px;top:465px" width="12" height="30" viewBox="0 0 12 30"><path d="M1.4 1.800L8.800 8.600M8.800 1.800L1.400 8.600" stroke="#111" stroke-width="1.500"/><path d="M1 21.800H10L5.500 27Z" fill="#111"/></svg>
<div class="cl" style="top:460px">对角点<b>:</b></div>
<div class="cl" style="top:474px">命令<b>:</b><b> </b><b> </b><b>'</b><b class="w" style="width:77px"><u style="transform:scaleX(0.798)">_COORDINATE</u></b></div>
<div class="cl" style="top:488px">坐标关闭<b>:</b><b> </b><b> </b>打开<b>(</b><b class="w" style="width:14px"><u style="transform:scaleX(0.692)">ON</u></b><b>)</b><b>/</b>角度<b>(</b><b class="w" style="width:7px"><u style="transform:scaleX(0.691)">A</u></b><b>)</b><b>/</b>距离<b>(</b><b class="w" style="width:7px"><u style="transform:scaleX(0.691)">D</u></b><b>)</b><b>/</b><b>&lt;</b>关闭<b>(</b><b class="w" style="width:21px"><u style="transform:scaleX(0.818)">OFF</u></b><b>)</b><b>&gt;</b><b>:</b><b> </b><b class="w" style="width:49px"><u style="transform:scaleX(0.781)">_TOGGLE</u></b></div>
<div class="cl" style="top:501.300px"><b>(</b>坐标为<b> </b>启用<b>)</b></div>
<div class="cl" style="top:520px;font-weight:900">命令<b>:</b></div>
<svg class="ic" style="left:764px;top:460.500px" width="16" height="54" viewBox="0 0 16 54"><path d="M4.400 11.600L7.900 7.600L11.400 11.600" fill="none" stroke="#505050" stroke-width="2"/><rect x=".6" y="22.500" width="15.400" height="16.700" fill="#c9c9c9"/><path d="M4.400 45.500L7.900 49.500L11.400 45.500" fill="none" stroke="#505050" stroke-width="2"/></svg>
<!-- status bar -->
<div class="abs" style="left:2.500px;top:542.300px;height:18px;line-height:18px;font-size:12.3px;color:#3a3a3a">就绪</div>
<div class="sepv" style="left:366px;top:541px;height:18px"></div>
<div class="sepv" style="left:376px;top:541px;height:18px"></div>
<div class="abs" style="left:381.500px;top:541.600px;height:18px;line-height:18px;font-size:12.2px;color:#444;white-space:nowrap;transform-origin:0 50%;transform:scaleX(.868)">15.7896,1.7463,0.0000</div>
<div class="sepv" style="left:508px;top:541px;height:18px"></div>
<div class="abs" style="left:514px;top:541.600px;height:18px;line-height:18px;font-size:12.2px;color:#333;white-space:nowrap;transform-origin:0 50%;transform:scaleX(.91)">OpenGL</div>
<div class="sepv" style="left:557px;top:541px;height:18px"></div><div class="sepv" style="left:597px;top:541px;height:18px"></div>
<svg class="ic" style="left:561.500px;top:542.500px" width="15" height="15" viewBox="0 0 15 15"><path d="M7.500 1L9.800 8L14.300 12.800L12.800 14.400L7.500 11.200L2.200 14.400L.7 12.800L5.200 8Z" fill="#fafafa" stroke="#1c1c1c" stroke-width="1.500" stroke-linejoin="round"/></svg>
<div class="abs" style="left:581.500px;top:542px;height:18px;line-height:18px;font-size:11px;letter-spacing:-0.6px;color:#5a5a5a">1:1</div>
<div class="abs" style="left:602px;top:543.500px;width:17px;height:17px;background:#efe45a"></div>
<svg class="ic" style="left:602px;top:543px" width="18" height="16" viewBox="0 0 18 16"><path d="M5.500 1L7.600 7.600L11.400 12.400L10 14L5.500 11L1.400 14L.4 12.400L3.600 7.600Z" fill="#fafafa" stroke="#1c1c1c" stroke-width="1.300" stroke-linejoin="round"/><path d="M12.600 4.600Q16.400 4.600 16.400 8Q16.400 10.200 14.800 11.400V13.400H10.800V11.400Q9 10.200 9 8Q9 4.600 12.600 4.600Z" fill="#fbf4e4" stroke="#c8b88a" stroke-width=".6"/><path d="M11.400 14.400H14.200" stroke="#333" stroke-width="1.300"/></svg>
<div class="sepv" style="left:620px;top:541px;height:18px"></div>
<svg class="ic" style="left:623px;top:541.500px" width="20" height="18" viewBox="0 0 20 18"><path d="M7 1.600L9.600 9.600L13 14.400L10 16L7 12.400L4 16L1 14.400L4.400 9.600Z" fill="#f6f6f6" stroke="#222" stroke-width="1.300" stroke-linejoin="round"/><path d="M11.600 8.600L16.600 3.200L18.600 5L13.600 10.400Z" fill="#b8a58c" stroke="#7a6a58" stroke-width=".7"/></svg>
<div class="sepv" style="left:642px;top:541px;height:18px"></div>
<svg class="ic" style="left:645px;top:542px" width="18" height="18" viewBox="0 0 18 18"><rect x="0" y="0" width="17" height="17" fill="#e9ebf0"/><g stroke="#444" stroke-width=".9"><path d="M.5 0V17M4.500 0V17M8.500 0V17M12.500 0V17M16.500 0V17M0 .5H17M0 4.500H17M0 8.500H17M0 12.500H17M0 16.500H17"/></g><path d="M8.500 1V16M1 8.500H16" stroke="#c81818" stroke-width="1.1"/><rect x="6.400" y="6.400" width="4.200" height="4.200" fill="#f8d0d0" stroke="#c81818" stroke-width="1.1"/></svg>
<div class="sepv" style="left:664px;top:541px;height:18px"></div>
<svg class="ic" style="left:669px;top:543px" width="16" height="16" viewBox="0 0 16 16"><rect x="0" y="0" width="15.600" height="15.600" fill="#c4c8d0"/><g stroke="#555a66" stroke-width="1"><path d="M.5 0V15.600M3.400 0V15.600M6.300 0V15.600M9.200 0V15.600M12.100 0V15.600M15 0V15.600M0 .5H15.600M0 3.400H15.600M0 6.300H15.600M0 9.200H15.600M0 12.100H15.600M0 15H15.600"/></g></svg>
<div class="sepv" style="left:687px;top:541px;height:18px"></div>
<svg class="ic" style="left:690px;top:541px" width="18" height="18" viewBox="0 0 18 18"><path d="M3.500 1.600V15.500" stroke="#222" stroke-width="1.300"/><path d="M3 15.600H16.600" stroke="#c01828" stroke-width="1.300"/><path d="M8.600 15V11.600H12" fill="none" stroke="#9aa0ac" stroke-width=".9"/></svg>
<div class="sepv" style="left:708px;top:541px;height:18px"></div>
<div class="abs" style="left:711px;top:543.500px;width:18px;height:17px;background:#efe45a"></div>
<svg class="ic" style="left:711px;top:541px" width="18" height="18" viewBox="0 0 18 18"><circle cx="9.400" cy="9" r="7" fill="none" stroke="#2a2a2a" stroke-width="1.500"/><path d="M9.400 9L15.600 3.600M9.400 9H16" stroke="#d02818" stroke-width="1.200"/><path d="M9.400 9L14.600 4.600Q16 6.600 16 9Z" fill="#f08a30" opacity=".55"/></svg>
<div class="sepv" style="left:730px;top:541px;height:18px"></div>
<div class="abs" style="left:733px;top:543.500px;width:18px;height:17px;background:#efe45a"></div>
<svg class="ic" style="left:733px;top:541px" width="18" height="18" viewBox="0 0 18 18"><path d="M8.500 .600V17.400" stroke="#2a2a2a" stroke-width="1.300"/><path d="M.6 8.500H17" stroke="#3a2a18" stroke-width="1.300"/><circle cx="8.500" cy="8.500" r="1.500" fill="#fff" stroke="#d02818" stroke-width="1"/></svg>
<div class="sepv" style="left:752px;top:541px;height:18px"></div>
<div class="abs" style="left:755px;top:543.500px;width:18px;height:17px;background:#efe45a"></div>
<svg class="ic" style="left:755px;top:541px" width="18" height="18" viewBox="0 0 18 18"><path d="M16 2L2.600 15H17" fill="none" stroke="#2a2a2a" stroke-width="1.700" stroke-linejoin="miter"/><path d="M9.600 5.400L13 9" stroke="#444" stroke-width=".8"/></svg>
<div class="abs" style="left:774px;top:547px;width:6px;height:12px;background-image:radial-gradient(circle at 1.200px 1.200px,#8f98ad 0,#8f98ad 1px,transparent 1.500px);background-size:3px 3px"></div>
</body>
</html>
